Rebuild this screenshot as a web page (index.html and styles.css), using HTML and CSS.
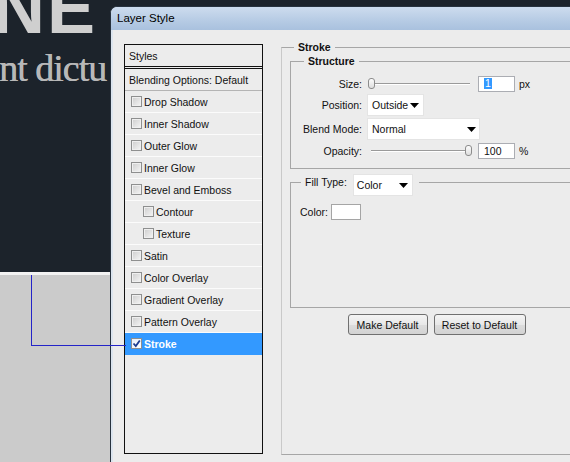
FILE: index.html
```html
<!DOCTYPE html>
<html>
<head>
<meta charset="utf-8">
<title>Layer Style</title>
<link rel="stylesheet" href="styles.css">
</head>
<body>
<div class="desktop">
  <div class="canvas">
    <div class="headline">NE</div>
    <div class="subline">nt dictu</div>
  </div>
  <div class="ground"></div>
</div>
<div class="connector"></div>
<div class="dialog">
  <div class="titlebar">Layer Style</div>
  <div class="body">
    <div class="styles-panel">
      <div class="row head">Styles</div>
      <div class="row blend">Blending Options: Default</div>
      <div class="row"><span class="cb"></span>Drop Shadow</div>
      <div class="row"><span class="cb"></span>Inner Shadow</div>
      <div class="row"><span class="cb"></span>Outer Glow</div>
      <div class="row"><span class="cb"></span>Inner Glow</div>
      <div class="row"><span class="cb"></span>Bevel and Emboss</div>
      <div class="row sub"><span class="cb"></span>Contour</div>
      <div class="row sub"><span class="cb"></span>Texture</div>
      <div class="row"><span class="cb"></span>Satin</div>
      <div class="row"><span class="cb"></span>Color Overlay</div>
      <div class="row"><span class="cb"></span>Gradient Overlay</div>
      <div class="row"><span class="cb"></span>Pattern Overlay</div>
      <div class="row selected"><span class="cb checked"><svg viewBox="0 0 9 9" width="9" height="9"><path d="M1.5 4.5 L3.8 7 L7.8 1.5" fill="none" stroke="#1d3b8f" stroke-width="1.8"/></svg></span>Stroke</div>
    </div>
    <fieldset class="group stroke">
      <legend>Stroke</legend>
      <fieldset class="group structure">
        <legend>Structure</legend>
        <div class="form">
          <span class="lbl">Size:</span>
          <div class="ctl">
            <div class="slider"><span class="thumb"></span></div>
            <span class="input"><span class="hl">1</span></span>
            <span class="unit">px</span>
          </div>
          <span class="lbl">Position:</span>
          <div class="ctl">
            <div class="select pos"><span>Outside</span><svg class="arrow" viewBox="0 0 9 5" width="9" height="5"><polygon points="0,0 9,0 4.5,5" fill="#000"/></svg></div>
          </div>
          <span class="lbl">Blend Mode:</span>
          <div class="ctl">
            <div class="select mode"><span>Normal</span><svg class="arrow" viewBox="0 0 9 5" width="9" height="5"><polygon points="0,0 9,0 4.5,5" fill="#000"/></svg></div>
          </div>
          <span class="lbl">Opacity:</span>
          <div class="ctl">
            <div class="slider end"><span class="thumb"></span></div>
            <span class="input">100</span>
            <span class="unit">%</span>
          </div>
        </div>
      </fieldset>
      <fieldset class="group fill">
        <legend><span class="lg-inner"><span class="lg-text">Fill Type:</span><span class="select ftype"><span>Color</span><svg class="arrow" viewBox="0 0 9 5" width="9" height="5"><polygon points="0,0 9,0 4.5,5" fill="#000"/></svg></span></span></legend>
        <div class="color-row"><span>Color:</span><span class="swatch"></span></div>
      </fieldset>
      <div class="buttons">
        <button class="btn make">Make Default</button>
        <button class="btn reset">Reset to Default</button>
      </div>
    </fieldset>
  </div>
</div>
</body>
</html>
```

FILE: styles.css
```css
* { box-sizing: border-box; }
html, body { margin: 0; padding: 0; }
body {
  width: 570px;
  height: 462px;
  overflow: hidden;
  position: relative;
  font-family: "Liberation Sans", Arial, sans-serif;
  font-size: 10.5px;
  color: #111;
  background: #cbcbcb;
}

.desktop { display: flex; flex-direction: column; height: 462px; }
.canvas {
  height: 275px;
  background: #1c232b;
  border-bottom: 3px solid #f2f2f2;
  overflow: hidden;
}
.headline {
  font: bold 72px/72px "Liberation Sans", Arial, sans-serif;
  color: #cfcfcf;
  margin: -28px 0 0 -7px;
  letter-spacing: 2px;
  white-space: nowrap;
}
.subline {
  font: 38px/38px "Liberation Serif", "Times New Roman", serif;
  color: #b8b8b8;
  margin: 5px 0 0 -1px;
  letter-spacing: -1px;
  white-space: nowrap;
  text-shadow: 0.5px 0 0 #b8b8b8;
}
.ground { flex: 1; background: #cbcbcb; }

.connector {
  position: absolute;
  left: 31px;
  top: 275px;
  width: 95px;
  height: 71px;
  border-left: 1px solid #2424c8;
  border-bottom: 1px solid #2424c8;
  z-index: 2;
}

.dialog {
  position: absolute;
  left: 110px;
  top: 6px;
  width: 500px;
  height: 456px;
  border: 1px solid #27323e;
  border-bottom: 0;
  border-radius: 7px 7px 0 0;
  overflow: hidden;
  background: #ececec;
}
.titlebar {
  height: 23px;
  line-height: 23px;
  padding-left: 6px;
  font-size: 11.5px;
  color: #000;
  background: linear-gradient(#cddcee, #b6cbe4 60%, #a9c1de);
}
.body {
  display: flex;
  align-items: flex-start;
  gap: 18px;
  height: 432px;
  padding: 11px 0 0 11px;
  border-left: 2px solid #dbe4ee;
}

/* left styles list */
.styles-panel {
  flex: none;
  width: 139px;
  height: 410px;
  margin-top: 3px;
  border: 1px solid #111;
  background: #ececec;
}
.row {
  height: 22px;
  display: flex;
  align-items: center;
  gap: 2px;
  padding-left: 6px;
  border-bottom: 1px solid #fbfbfb;
  white-space: nowrap;
}
.row.head { height: 24px; padding-left: 4px; border-bottom: 3px double #111; }
.row.blend { padding-left: 4px; border-bottom-color: #b4b4b4; }
.row.sub { padding-left: 18px; }
.row.selected {
  background: #3399ff;
  border-bottom-color: #3399ff;
  color: #fff;
  font-weight: bold;
}
.cb {
  flex: none;
  width: 11px;
  height: 11px;
  border: 1px solid #8e8f8f;
  background: linear-gradient(135deg, #cdcdcd, #f5f5f5);
  box-shadow: inset 0 0 0 1px #efefef;
  display: flex;
  align-items: center;
  justify-content: center;
}
.cb.checked { background: linear-gradient(135deg, #e8eef8, #ffffff); box-shadow: none; }

/* group boxes */
fieldset.group {
  margin: 0;
  min-width: 0;
  border: 1px solid #a6a6a6;
}
legend {
  font-weight: bold;
  line-height: 12px;
  padding: 0 4px;
}
fieldset.stroke {
  flex: none;
  width: 311px;
  height: 414px;
  padding: 0 8px;
  border-left-color: #c9c9c9;
}
.stroke > legend { margin-left: 4px; }
fieldset.structure { margin-top: 2px; padding: 8px 0 9px 0; }
.structure > legend { margin-left: 13px; }

.form {
  display: grid;
  grid-template-columns: 71px 1fr;
  grid-template-rows: 17px 22px 22px 17px;
  column-gap: 5px;
  row-gap: 2px;
  align-items: center;
}
.form > .ctl:first-of-type { margin-top: 0; }
.lbl { text-align: right; white-space: nowrap; }
.ctl { display: flex; align-items: center; }

.slider {
  flex: none;
  width: 103px;
  height: 11px;
  display: flex;
  background:
    linear-gradient(#9a9a9a, #9a9a9a) 4px 5px / 99px 1px no-repeat,
    linear-gradient(#ffffff, #ffffff) 4px 6px / 99px 1px no-repeat;
}
.thumb {
  flex: none;
  width: 7px;
  height: 11px;
  margin-left: 1px;
  border: 1px solid #8c8c8c;
  border-radius: 3px;
  background: linear-gradient(#fdfdfd, #dedede);
}
.slider.end .thumb { margin-left: 98px; }

.input {
  flex: none;
  width: 37px;
  height: 16px;
  margin-left: 8px;
  padding-left: 5px;
  border: 1px solid #abadb3;
  background: #fff;
  display: flex;
  align-items: center;
}
.hl { background: #3399ff; color: #fff; padding: 0 1px; line-height: 11px; }
.unit { margin-left: 4px; }

.select {
  display: flex;
  align-items: center;
  justify-content: space-between;
  height: 22px;
  padding: 0 4px;
  background: #fff;
  border: 1px solid #e4e4e4;
  font-weight: normal;
}
.select.pos { width: 57px; }
.select.mode { width: 113px; padding-right: 3px; }
.arrow { flex: none; display: block; }

fieldset.fill { margin-top: 6px; padding: 15px 0 87px 9px; }
.fill > legend { margin-left: 1px; padding: 0 6px 0 4px; font-weight: normal; }
.lg-inner { display: flex; align-items: flex-start; }
.lg-text { line-height: 14px; }
.select.ftype { width: 60px; margin: -1px 0 -7px 6px; padding: 0 4px 0 3px; }

.color-row { display: flex; align-items: center; gap: 3px; }
.swatch { width: 30px; height: 16px; background: #fff; border: 1px solid #a5a5a5; }

.buttons { display: flex; justify-content: center; gap: 6px; margin-top: 6px; }
.btn {
  height: 21px;
  padding: 0;
  border: 1px solid #707070;
  border-radius: 3px;
  background: linear-gradient(#f4f4f4, #e8e8e8 50%, #dcdcdc 51%, #d3d3d3);
  font: 10.5px "Liberation Sans", Arial, sans-serif;
  color: #111;
}
.btn.make { width: 80px; }
.btn.reset { width: 92px; }
```
